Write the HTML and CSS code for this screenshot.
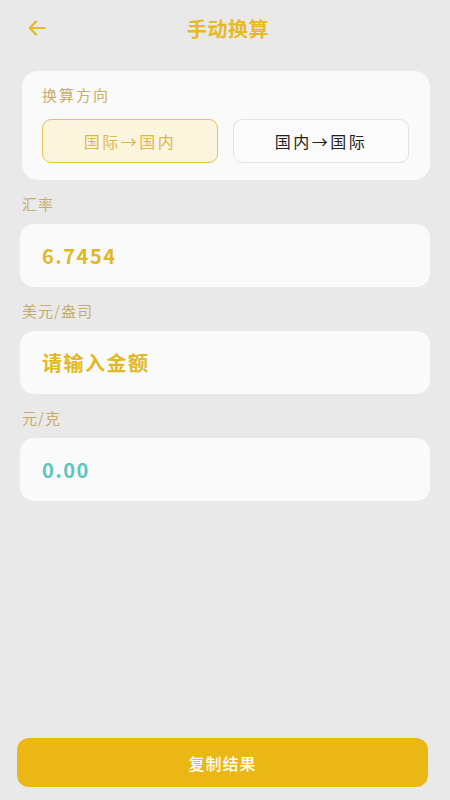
FILE: index.html
```html
<!DOCTYPE html>
<html lang="zh">
<head>
<meta charset="utf-8">
<link rel="stylesheet" href="styles.css">
</head>
<body>
<div class="page">
  <header class="topbar">
    <svg class="back" viewBox="0 0 24 24" width="22" height="22"><path d="M20 12H5M11 5l-7 7 7 7" fill="none" stroke="#e8b923" stroke-width="2.4" stroke-linecap="round" stroke-linejoin="round"/></svg>
    <h1 class="title">手动换算</h1>
  </header>

  <section class="card dir">
    <div class="dir-label">换算方向</div>
    <div class="dir-btns">
      <div class="dbtn active">国际→国内</div>
      <div class="dbtn">国内→国际</div>
    </div>
  </section>

  <div class="label">汇率</div>
  <div class="field"><span class="val">6.7454</span></div>

  <div class="label">美元/盎司</div>
  <div class="field"><span class="val">请输入金额</span></div>

  <div class="label">元/克</div>
  <div class="field"><span class="val teal">0.00</span></div>

  <div class="spacer"></div>
  <div class="copy">复制结果</div>
</div>
</body>
</html>
```

FILE: styles.css
```css
* { box-sizing: border-box; }
html, body { margin: 0; padding: 0; }
body {
  background: #e9e9e9;
  font-family: "Noto Sans CJK SC", "Noto Sans", sans-serif;
  width: 450px;
  height: 800px;
  overflow: hidden;
}
.page {
  display: flex;
  flex-direction: column;
  height: 800px;
  padding: 0 20px 13px 20px;
}
.topbar {
  position: relative;
  height: 56px;
  display: flex;
  align-items: center;
  justify-content: center;
  padding-left: 6px;
}
.back {
  position: absolute;
  left: 6px;
  top: 17px;
}
.title {
  margin: 0;
  font-size: 20px;
  font-weight: 700;
  color: #e8b923;
  letter-spacing: 0.5px;
}
.card {
  background: #fafafa;
  border-radius: 16px;
}
.dir {
  margin-top: 15px;
  margin-left: 2px;
  padding: 13px 21px 17px 20px;
}
.dir-label {
  font-size: 15px;
  color: #c6ad6c;
  letter-spacing: 2px;
  line-height: 22px;
}
.dir-btns {
  display: flex;
  gap: 15px;
  margin-top: 13px;
}
.dbtn {
  flex: 1;
  height: 44px;
  border: 1.5px solid #e2e2e2;
  border-radius: 9px;
  background: #fbfbfb;
  display: flex;
  align-items: center;
  justify-content: center;
  font-size: 16px;
  color: #222;
  letter-spacing: 2.5px;
}
.dbtn.active {
  background: #fcf5dd;
  border-color: #e3c54f;
  color: #d9b94c;
}
.label {
  font-size: 15px;
  color: #c6ad6c;
  margin-top: 13px;
  margin-left: 2px;
  line-height: 22px;
  letter-spacing: 1px;
}
.field {
  background: #fafafa;
  border-radius: 14px;
  height: 63px;
  margin-top: 9px;
  display: flex;
  align-items: center;
  padding-left: 22px;
}
.val {
  font-size: 20px;
  font-weight: 700;
  color: #e1b825;
  letter-spacing: 1.5px;
}
.val.teal { color: #5cc5bc; }
.spacer { flex: 1; }
.copy {
  height: 49px;
  margin-left: -3px;
  margin-right: 2px;
  background: #ebb715;
  border-radius: 12px;
  color: #fff;
  font-size: 16px;
  font-weight: 500;
  letter-spacing: 1px;
  display: flex;
  align-items: center;
  justify-content: center;
}
```
